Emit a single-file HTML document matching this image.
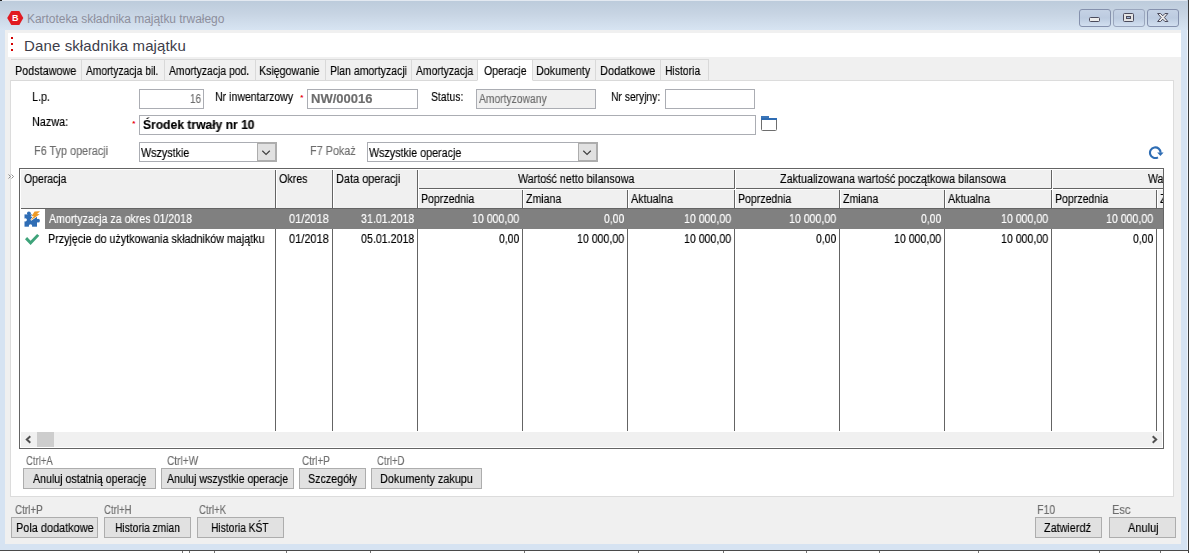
<!DOCTYPE html>
<html lang="pl">
<head>
<meta charset="utf-8">
<title>Kartoteka składnika majątku trwałego</title>
<style>
html,body{margin:0;padding:0;}
body{width:1189px;height:553px;overflow:hidden;position:relative;background:#fff;font-family:"Liberation Sans",sans-serif;font-size:12.5px;color:#000;}
.a{position:absolute;box-sizing:border-box;}
.t{position:absolute;white-space:nowrap;line-height:14px;height:14px;transform-origin:0 0;will-change:transform;-webkit-text-stroke:0.15px;}
.b{font-weight:bold;}
.g{color:#6d6d6d;}
.win{left:0;top:0;width:1188px;height:551px;background:#d6e3f2;}
.titlebar{left:0;top:0;width:1188px;height:30px;background:linear-gradient(#bccbdb,#c7d4e3 45%,#d7e4f2);}
.client{left:5px;top:30px;width:1176px;height:514px;background:#f0f0f0;}
.head{left:8px;top:33px;width:1173px;height:24px;background:#fff;}
.cap{position:absolute;top:9px;height:18px;box-sizing:border-box;border:1px solid #8591ad;border-radius:3px;background:linear-gradient(#c5d2e5,#bccbe0 50%,#d2dff0);}
.tab{position:absolute;top:59px;height:22px;box-sizing:border-box;border:1px solid #d9d9d9;border-left:none;background:#f0f0f0;}
.page{left:10px;top:80px;width:1164px;height:417px;background:#fff;border:1px solid #dcdcdc;}
.inp{position:absolute;box-sizing:border-box;height:20px;border:1px solid #abadb3;background:#fff;}
.btn{position:absolute;box-sizing:border-box;height:21px;border:1px solid #adadad;background:#e1e1e1;}
.vl{position:absolute;width:1px;background:#646464;}
.hl{position:absolute;height:1px;background:#646464;}
</style>
</head>
<body>
<div class="a win"></div>
<div class="a" style="left:1187px;top:0;width:1px;height:551px;background:#eef4fb"></div>
<div class="a" style="left:1188px;top:0;width:1px;height:553px;background:#3c3c3c"></div>
<div class="a" style="left:0;top:550px;width:1189px;height:1px;background:#4a4a4a"></div>
<div class="a titlebar"></div>
<div class="a" style="left:2px;top:0;width:1185px;height:1px;background:#e3e9f1"></div>
<div class="a" style="left:0;top:0;width:2px;height:1px;background:#222"></div>
<div class="a client"></div>
<div class="a head"></div>

<div class="a" style="left:182px;top:551px;width:1px;height:2px;background:#777"></div>
<div class="a" style="left:189px;top:551px;width:1px;height:2px;background:#777"></div>
<div class="a" style="left:214px;top:551px;width:1px;height:2px;background:#777"></div>
<div class="a" style="left:286px;top:551px;width:1px;height:2px;background:#777"></div>
<div class="a" style="left:370px;top:551px;width:1px;height:2px;background:#777"></div>
<div class="a" style="left:524px;top:551px;width:1px;height:2px;background:#777"></div>
<div class="a" style="left:638px;top:551px;width:1px;height:2px;background:#777"></div>
<div class="a" style="left:723px;top:551px;width:1px;height:2px;background:#777"></div>
<div class="a" style="left:806px;top:551px;width:1px;height:2px;background:#777"></div>
<div class="a" style="left:879px;top:551px;width:1px;height:2px;background:#777"></div>
<div class="a" style="left:978px;top:551px;width:1px;height:2px;background:#777"></div>
<div class="a" style="left:1099px;top:551px;width:1px;height:2px;background:#777"></div>
<div class="a" style="left:1160px;top:551px;width:1px;height:2px;background:#777"></div>
<svg class="a" style="left:7px;top:10px" width="17" height="16" viewBox="0 0 17 16"><polygon points="0.2,8 4.300,1 12.300,1 16.300,8 12.300,15 4.300,15" fill="#e11b22"/><text x="8.300" y="11.100" font-family="Liberation Sans, sans-serif" font-weight="bold" font-size="9" fill="#fff" text-anchor="middle">B</text></svg>
<div class="a" style="left:27px;top:11px;font-size:12px;line-height:16px;height:16px;color:#8d8f9d;white-space:nowrap;letter-spacing:-0.040px">Kartoteka składnika majątku trwałego</div>
<div class="cap" style="left:1079px;width:32px"><svg class="a" style="left:9px;top:7px" width="11" height="5" viewBox="0 0 11 5"><rect x="0.500" y="0.500" width="10" height="4" rx="1" fill="#ececec" stroke="#4b4b5c"/></svg></div>
<div class="cap" style="left:1113px;width:32px;border-color:#9aa6bd"><svg class="a" style="left:9px;top:3px" width="11" height="9" viewBox="0 0 11 9"><rect x="0.500" y="0.500" width="10" height="8" rx="1" fill="#e4e4e4" stroke="#4b4b5c"/><rect x="3.500" y="3.500" width="4" height="2" fill="#9fb4d4" stroke="#4b4b5c"/></svg></div>
<div class="cap" style="left:1147px;width:32px"><svg class="a" style="left:9px;top:3px" width="12" height="9" viewBox="0 0 12 9"><path d="M0.600 0.500H3.600L5.750 2.800 7.900 0.500H10.900L7.400 4.500 10.900 8.500H7.900L5.750 6.200 3.600 8.500H0.600L4.100 4.500Z" fill="#ececec" stroke="#4b4b5c" stroke-width="1" stroke-linejoin="round"/></svg></div>
<div class="a" style="left:11px;top:37px;width:2px;height:2px;background:#d40000"></div>
<div class="a" style="left:11px;top:43px;width:2px;height:2px;background:#d40000"></div>
<div class="a" style="left:11px;top:49px;width:2px;height:2px;background:#d40000"></div>
<div class="a" style="left:24px;top:36px;font-size:15px;line-height:20px;height:20px;color:#3d3d4a;letter-spacing:0.12px;white-space:nowrap">Dane składnika majątku</div>
<div class="a page"></div>

<div class="tab" style="left:11px;width:71px;"></div>
<div class="t" style="left:14.89px;top:63.64px;transform:scaleX(0.8638);z-index:3;">Podstawowe</div>
<div class="tab" style="left:82px;width:83px;"></div>
<div class="t" style="left:85.70px;top:63.64px;transform:scaleX(0.8194);z-index:3;">Amortyzacja bil.</div>
<div class="tab" style="left:165px;width:91px;"></div>
<div class="t" style="left:168.80px;top:63.64px;transform:scaleX(0.8304);z-index:3;">Amortyzacja pod.</div>
<div class="tab" style="left:256px;width:70px;"></div>
<div class="t" style="left:259.35px;top:63.64px;transform:scaleX(0.8509);z-index:3;">Księgowanie</div>
<div class="tab" style="left:326px;width:86px;"></div>
<div class="t" style="left:329.76px;top:63.64px;transform:scaleX(0.8385);z-index:3;">Plan amortyzacji</div>
<div class="tab" style="left:412px;width:66px;"></div>
<div class="t" style="left:415.70px;top:63.64px;transform:scaleX(0.8312);z-index:3;">Amortyzacja</div>
<div class="tab" style="left:477px;width:56px;border-left:1px solid #d9d9d9;background:#fff;border-bottom-color:#fff;z-index:2;"></div>
<div class="t" style="left:483.60px;top:63.64px;transform:scaleX(0.8411);z-index:3;">Operacje</div>
<div class="tab" style="left:533px;width:63px;"></div>
<div class="t" style="left:535.74px;top:63.64px;transform:scaleX(0.8575);z-index:3;">Dokumenty</div>
<div class="tab" style="left:596px;width:65px;"></div>
<div class="t" style="left:599.72px;top:63.64px;transform:scaleX(0.8850);z-index:3;">Dodatkowe</div>
<div class="tab" style="left:661px;width:48px;"></div>
<div class="t" style="left:664.87px;top:63.64px;transform:scaleX(0.8281);z-index:3;">Historia</div>
<div class="t" style="left:31.74px;top:89.64px;transform:scaleX(0.8567);">L.p.</div>
<div class="inp" style="left:139px;top:89px;width:65px"></div>
<div class="t g" style="left:190.30px;top:91.64px;transform:scaleX(0.7956);">16</div>
<div class="t" style="left:214.56px;top:89.64px;transform:scaleX(0.8444);">Nr inwentarzowy</div>
<div class="a" style="left:300.200px;top:92px;font-size:8px;line-height:12px;color:#e8000c;font-weight:bold">*</div>
<div class="inp" style="left:307px;top:89px;width:111px"></div>
<div class="t b g" style="left:310.60px;top:91.64px;transform:scaleX(1.0422);">NW/00016</div>
<div class="t" style="left:431.40px;top:89.64px;transform:scaleX(0.8299);">Status:</div>
<div class="inp" style="left:476px;top:89px;width:120px;background:#f0f0f0"></div>
<div class="t g" style="left:478.80px;top:91.64px;transform:scaleX(0.8257);">Amortyzowany</div>
<div class="t" style="left:610.58px;top:89.64px;transform:scaleX(0.8239);">Nr seryjny:</div>
<div class="inp" style="left:665px;top:89px;width:90px"></div>
<div class="t" style="left:31.73px;top:114.64px;transform:scaleX(0.8655);">Nazwa:</div>
<div class="a" style="left:132.200px;top:118px;font-size:8px;line-height:12px;color:#e8000c;font-weight:bold">*</div>
<div class="inp" style="left:139px;top:115px;width:617px"></div>
<div class="t b" style="left:142.80px;top:117.64px;transform:scaleX(0.9673);">Środek trwały nr 10</div>
<svg class="a" style="left:761px;top:116px" width="16" height="15" viewBox="0 0 16 15"><path d="M0.500 3.500V13.500a1 1 0 0 0 1 1H14.500a1 1 0 0 0 1-1V3.500" fill="#fff" stroke="#6e6e6e"/><rect x="0" y="0" width="8" height="4" fill="#3b76b9"/><rect x="0" y="2" width="16" height="2" fill="#2f6cb3"/></svg>
<div class="t g" style="left:33.93px;top:143.64px;transform:scaleX(0.8688);">F6 Typ operacji</div>
<div class="inp" style="left:139px;top:142px;width:138px"><div class="a" style="right:-1px;top:-1px;width:20px;height:20px;border:solid #adadad;border-width:2px 2px 2px 1px;background:#e1e1e1"><svg class="a" style="left:-1px;top:-2px" width="20" height="20" viewBox="0 0 20 20"><path d="M5.300 8.800L9.050 12.500 12.800 8.800" fill="none" stroke="#404040" stroke-width="1.200"/></svg></div></div>
<div class="t" style="left:140.80px;top:145.64px;transform:scaleX(0.8597);">Wszystkie</div>
<div class="t g" style="left:309.73px;top:143.64px;transform:scaleX(0.8671);">F7 Pokaż</div>
<div class="inp" style="left:367px;top:142px;width:231px"><div class="a" style="right:-1px;top:-1px;width:20px;height:20px;border:solid #adadad;border-width:2px 2px 2px 1px;background:#e1e1e1"><svg class="a" style="left:-1px;top:-2px" width="20" height="20" viewBox="0 0 20 20"><path d="M5.300 8.800L9.050 12.500 12.800 8.800" fill="none" stroke="#404040" stroke-width="1.200"/></svg></div></div>
<div class="t" style="left:368.90px;top:145.64px;transform:scaleX(0.8568);">Wszystkie operacje</div>
<svg class="a" style="left:1148px;top:146px" width="16" height="14" viewBox="0 0 16 14"><path d="M12.600 6.700A5.300 5.300 0 1 0 9.950 11.300" fill="none" stroke="#2e6db4" stroke-width="2.100"/><polygon points="9.200,6.400 15.600,6.400 12.400,10.100" fill="#2e6db4"/></svg>
<div class="a" style="left:19px;top:168px;width:1145px;height:281px;border:1px solid #646464;background:#fff"></div>
<div class="a" style="left:21px;top:170px;width:1142px;height:38px;background:#f0f0f0"></div>
<div class="hl" style="left:21px;top:208px;width:1142px"></div>
<div class="hl" style="left:417px;top:188px;width:746px"></div>
<div class="vl" style="left:275px;top:170px;height:261px"></div>
<div class="vl" style="left:332px;top:170px;height:261px"></div>
<div class="vl" style="left:417px;top:170px;height:261px"></div>
<div class="vl" style="left:522px;top:188px;height:243px"></div>
<div class="vl" style="left:627px;top:188px;height:243px"></div>
<div class="vl" style="left:734px;top:170px;height:261px"></div>
<div class="vl" style="left:839px;top:188px;height:243px"></div>
<div class="vl" style="left:944px;top:188px;height:243px"></div>
<div class="vl" style="left:1051px;top:170px;height:261px"></div>
<div class="vl" style="left:1156px;top:188px;height:243px"></div>
<div class="a" style="left:21px;top:169px;width:1142px;height:1px;background:#fff"></div>
<div class="a" style="left:418px;top:189px;width:745px;height:1px;background:#fff"></div>
<div class="a" style="left:276px;top:169px;width:1px;height:39px;background:#fff"></div>
<div class="a" style="left:333px;top:169px;width:1px;height:39px;background:#fff"></div>
<div class="a" style="left:418px;top:169px;width:1px;height:39px;background:#fff"></div>
<div class="a" style="left:523px;top:189px;width:1px;height:19px;background:#fff"></div>
<div class="a" style="left:628px;top:189px;width:1px;height:19px;background:#fff"></div>
<div class="a" style="left:735px;top:169px;width:1px;height:39px;background:#fff"></div>
<div class="a" style="left:840px;top:189px;width:1px;height:19px;background:#fff"></div>
<div class="a" style="left:945px;top:189px;width:1px;height:19px;background:#fff"></div>
<div class="a" style="left:1052px;top:169px;width:1px;height:39px;background:#fff"></div>
<div class="a" style="left:1157px;top:189px;width:1px;height:19px;background:#fff"></div>
<div class="a" style="left:45px;top:209px;width:1118px;height:20px;background:#808080"></div>
<div class="t" style="left:23.75px;top:171.64px;transform:scaleX(0.8352);">Operacja</div>
<div class="t" style="left:279.20px;top:171.64px;transform:scaleX(0.8553);">Okres</div>
<div class="t" style="left:335.52px;top:171.64px;transform:scaleX(0.8751);">Data operacji</div>
<div class="t" style="left:517.70px;top:171.64px;transform:scaleX(0.8574);">Wartość netto bilansowa</div>
<div class="t" style="left:780.00px;top:171.64px;transform:scaleX(0.8630);">Zaktualizowana wartość początkowa bilansowa</div>
<div class="a" style="left:1052px;top:170px;width:111px;height:18px;overflow:hidden">
<div class="t" style="left:96.10px;top:1.64px;transform:scaleX(0.8462);">Wartość netto podatkowa</div>
</div>
<div class="t" style="left:420.86px;top:191.64px;transform:scaleX(0.8429);">Poprzednia</div>
<div class="t" style="left:525.60px;top:191.64px;transform:scaleX(0.8459);">Zmiana</div>
<div class="t" style="left:630.90px;top:191.64px;transform:scaleX(0.8625);">Aktualna</div>
<div class="t" style="left:737.86px;top:191.64px;transform:scaleX(0.8429);">Poprzednia</div>
<div class="t" style="left:842.60px;top:191.64px;transform:scaleX(0.8459);">Zmiana</div>
<div class="t" style="left:947.90px;top:191.64px;transform:scaleX(0.8625);">Aktualna</div>
<div class="t" style="left:1054.86px;top:191.64px;transform:scaleX(0.8429);">Poprzednia</div>
<div class="a" style="left:1157px;top:189px;width:6px;height:19px;overflow:hidden">
<div class="t" style="left:2.60px;top:2.64px;transform:scaleX(0.8459);">Zmiana</div>
</div>
<div class="t" style="left:48.60px;top:211.64px;transform:scaleX(0.8502);color:#fff;">Amortyzacja za okres 01/2018</div>
<div class="t" style="left:289.30px;top:211.64px;transform:scaleX(0.8799);color:#fff;">01/2018</div>
<div class="t" style="left:360.80px;top:211.64px;transform:scaleX(0.8513);color:#fff;">31.01.2018</div>
<div class="t" style="left:472.00px;top:211.64px;transform:scaleX(0.8463);color:#fff;">10 000,00</div>
<div class="t" style="left:603.90px;top:211.64px;transform:scaleX(0.8287);color:#fff;">0,00</div>
<div class="t" style="left:684.00px;top:211.64px;transform:scaleX(0.8463);color:#fff;">10 000,00</div>
<div class="t" style="left:789.00px;top:211.64px;transform:scaleX(0.8463);color:#fff;">10 000,00</div>
<div class="t" style="left:920.90px;top:211.64px;transform:scaleX(0.8287);color:#fff;">0,00</div>
<div class="t" style="left:1001.00px;top:211.64px;transform:scaleX(0.8463);color:#fff;">10 000,00</div>
<div class="t" style="left:1106.00px;top:211.64px;transform:scaleX(0.8463);color:#fff;">10 000,00</div>
<div class="t" style="left:47.74px;top:231.64px;transform:scaleX(0.8585);color:#000;">Przyjęcie do użytkowania składników majątku</div>
<div class="t" style="left:289.30px;top:231.64px;transform:scaleX(0.8799);color:#000;">01/2018</div>
<div class="t" style="left:360.80px;top:231.64px;transform:scaleX(0.8513);color:#000;">05.01.2018</div>
<div class="t" style="left:498.90px;top:231.64px;transform:scaleX(0.8287);color:#000;">0,00</div>
<div class="t" style="left:577.00px;top:231.64px;transform:scaleX(0.8463);color:#000;">10 000,00</div>
<div class="t" style="left:684.00px;top:231.64px;transform:scaleX(0.8463);color:#000;">10 000,00</div>
<div class="t" style="left:815.90px;top:231.64px;transform:scaleX(0.8287);color:#000;">0,00</div>
<div class="t" style="left:894.00px;top:231.64px;transform:scaleX(0.8463);color:#000;">10 000,00</div>
<div class="t" style="left:1001.00px;top:231.64px;transform:scaleX(0.8463);color:#000;">10 000,00</div>
<div class="t" style="left:1132.90px;top:231.64px;transform:scaleX(0.8287);color:#000;">0,00</div>
<svg class="a" style="left:24px;top:211px" width="16" height="16" viewBox="0 0 16 16"><path d="M0.500 3.400H13V15.700H0.500Z" fill="#2f6db5"/><circle cx="4.900" cy="2.300" r="1.900" fill="#2f6db5"/><circle cx="14" cy="9.700" r="1.900" fill="#2f6db5"/><circle cx="1.300" cy="8.800" r="1.600" fill="#fff"/><circle cx="6.500" cy="14.900" r="1.700" fill="#fff"/><polygon points="10.600,0.500 16,0.200 13,3.100 15.700,3.300 6.900,9.200 9.800,5.100 7.700,5.100" fill="#ee9a26" stroke="#fff" stroke-width="1.200" paint-order="stroke"/></svg>
<svg class="a" style="left:25px;top:234px" width="15" height="12" viewBox="0 0 15 12"><polygon points="0,5.200 2.100,3.100 5.600,6.800 12.100,0 14.300,1.800 5.600,11" fill="#3ea37a"/></svg>
<div class="a" style="left:21px;top:432px;width:1141px;height:15px;background:#f0f0f0"></div>
<div class="a" style="left:37px;top:432px;width:17px;height:15px;background:#cdcdcd"></div>
<svg class="a" style="left:25px;top:435px" width="7" height="9" viewBox="0 0 7 9"><path d="M5.300 1.200L1.800 4.500l3.500 3.300" fill="none" stroke="#505050" stroke-width="2"/></svg>
<svg class="a" style="left:1151px;top:435px" width="7" height="9" viewBox="0 0 7 9"><path d="M1.700 1.200L5.200 4.500l-3.500 3.300" fill="none" stroke="#505050" stroke-width="2"/></svg>
<svg class="a" style="left:8px;top:174px" width="6" height="5" viewBox="0 0 6 5"><path d="M0.500 0.500L2.500 2.500 0.500 4.500M3.500 0.500L5.500 2.500 3.500 4.500" fill="none" stroke="#808080" stroke-width="0.900"/></svg>
<div class="t g" style="left:25.60px;top:453.64px;transform:scaleX(0.7611);">Ctrl+A</div>
<div class="t g" style="left:166.80px;top:453.64px;transform:scaleX(0.8080);">Ctrl+W</div>
<div class="t g" style="left:301.50px;top:453.64px;transform:scaleX(0.7945);">Ctrl+P</div>
<div class="t g" style="left:376.90px;top:453.64px;transform:scaleX(0.7667);">Ctrl+D</div>
<div class="btn" style="left:23px;top:468px;width:133px"></div>
<div class="t" style="left:32.90px;top:471.64px;transform:scaleX(0.8504);">Anuluj ostatnią operację</div>
<div class="btn" style="left:161px;top:468px;width:133px"></div>
<div class="t" style="left:167.10px;top:471.64px;transform:scaleX(0.8459);">Anuluj wszystkie operacje</div>
<div class="btn" style="left:299px;top:468px;width:67px"></div>
<div class="t" style="left:307.60px;top:471.64px;transform:scaleX(0.8593);">Szczegóły</div>
<div class="btn" style="left:371px;top:468px;width:111px"></div>
<div class="t" style="left:379.53px;top:471.64px;transform:scaleX(0.8675);">Dokumenty zakupu</div>
<div class="t g" style="left:14.80px;top:502.64px;transform:scaleX(0.7887);">Ctrl+P</div>
<div class="t g" style="left:103.80px;top:502.64px;transform:scaleX(0.7695);">Ctrl+H</div>
<div class="t g" style="left:199.40px;top:502.64px;transform:scaleX(0.7723);">Ctrl+K</div>
<div class="t g" style="left:1036.95px;top:502.64px;transform:scaleX(0.8452);">F10</div>
<div class="t g" style="left:1111.81px;top:502.64px;transform:scaleX(0.8883);">Esc</div>
<div class="btn" style="left:11px;top:517px;width:87px"></div>
<div class="t" style="left:15.63px;top:520.64px;transform:scaleX(0.8727);">Pola dodatkowe</div>
<div class="btn" style="left:104px;top:517px;width:87px"></div>
<div class="t" style="left:115.18px;top:520.64px;transform:scaleX(0.8193);">Historia zmian</div>
<div class="btn" style="left:197px;top:517px;width:87px"></div>
<div class="t" style="left:210.98px;top:520.64px;transform:scaleX(0.8214);">Historia KŚT</div>
<div class="btn" style="left:1035px;top:517px;width:67px"></div>
<div class="t" style="left:1044.40px;top:520.64px;transform:scaleX(0.8659);">Zatwierdź</div>
<div class="btn" style="left:1109px;top:517px;width:67px"></div>
<div class="t" style="left:1127.60px;top:520.64px;transform:scaleX(0.8831);">Anuluj</div>
</body>
</html>
